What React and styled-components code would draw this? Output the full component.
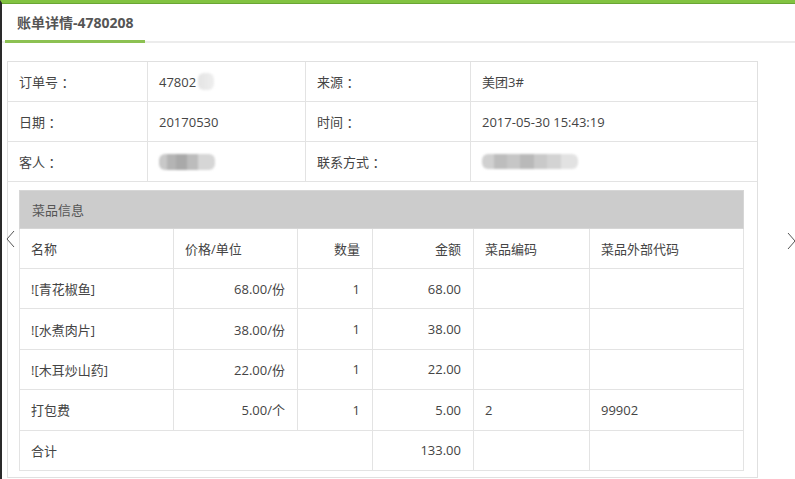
import styled, { createGlobalStyle } from "styled-components";

const GlobalStyle = createGlobalStyle`
  html, body {
    margin: 0;
    padding: 0;
    background: #fff;
  }
  body {
    font-family: "Open Sans", "Noto Sans CJK SC", sans-serif;
    font-size: 13px;
    color: #444;
  }
  * { box-sizing: border-box; }
`;

const Page = styled.div`
  position: relative;
  height: 479px;
  overflow: hidden;
  border-left: 2px solid #2a2a2a;
  border-top: 3px solid #82c341;
  box-shadow: inset 0 1px 0 #6aa634;
`;

const TitleBar = styled.div`
  display: flex;
  height: 40px;
  padding-left: 3px;
  border-bottom: 2px solid #ececec;
`;

const Tab = styled.div`
  width: 140px;
  height: 40px;
  margin-bottom: -2px;
  padding-left: 12px;
  display: flex;
  align-items: center;
  font-size: 14px;
  font-weight: 700;
  color: #555;
  border-bottom: 3px solid #8cc152;
`;

const Panel = styled.div`
  width: 751px;
  margin: 18px 0 0 5px;
  padding-bottom: 6px;
  border: 1px solid #e0e0e0;
`;

const InfoGrid = styled.div`
  display: grid;
  grid-template-columns: 140px 158px 165px 286px;
  grid-auto-rows: 40px;
`;

const InfoCell = styled.div`
  display: flex;
  align-items: center;
  padding-left: 11px;
  border-bottom: 1px solid #e3e3e3;
  border-right: ${(p) => (p.$last ? "none" : "1px solid #e3e3e3")};
  color: #444;
  white-space: pre;
`;

const Blob = styled.span`
  display: inline-block;
  width: ${(p) => p.$w}px;
  height: ${(p) => p.$h}px;
  margin-left: ${(p) => p.$ml || 0}px;
  border-radius: 6px;
  background: ${(p) => p.$bg};
  filter: blur(1.2px);
`;

const DishBox = styled.div`
  width: 725px;
  margin: 8px 0 0 11px;
`;

const DishHeader = styled.div`
  height: 39px;
  display: flex;
  align-items: center;
  padding-left: 12px;
  background: #cccccc;
  color: #555;
  border: 1px solid #d6d6d6;
`;

const DishGrid = styled.div`
  display: grid;
  grid-template-columns: 154px 124px 75px 101px 116px 154px;
  grid-template-rows: 40px repeat(5, 40.4px);
  border-left: 1px solid #e3e3e3;
`;

const DishCell = styled.div`
  display: flex;
  align-items: center;
  justify-content: ${(p) => (p.$right ? "flex-end" : "flex-start")};
  padding: 0 12px 0 11px;
  border-right: 1px solid #e3e3e3;
  border-bottom: 1px solid #e3e3e3;
  grid-column: ${(p) => (p.$span ? `span ${p.$span}` : "auto")};
  color: #444;
  white-space: nowrap;
`;

const Arrow = styled.svg`
  position: absolute;
  top: ${(p) => p.$top}px;
  left: ${(p) => p.$left}px;
`;

const blurOrder = "linear-gradient(90deg, #e4e4e4, #eeeeee)";
const blurGuest =
  "linear-gradient(90deg, #c8c8c8 0 14%, #b4b4b4 14% 30%, #a9a9a9 30% 50%, #bcbcbc 50% 70%, #d6d6d6 70% 100%)";
const blurPhone =
  "linear-gradient(90deg, #d0d0d0 0 12%, #bdbdbd 12% 26%, #c6c6c6 26% 40%, #b9b9b9 40% 54%, #c9c9c9 54% 68%, #d3d3d3 68% 82%, #e2e2e2 82% 100%)";

const dishes = [
  { name: "![青花椒鱼]", price: "68.00/份", qty: "1", amount: "68.00", code: "", ext: "" },
  { name: "![水煮肉片]", price: "38.00/份", qty: "1", amount: "38.00", code: "", ext: "" },
  { name: "![木耳炒山药]", price: "22.00/份", qty: "1", amount: "22.00", code: "", ext: "" },
  { name: "打包费", price: "5.00/个", qty: "1", amount: "5.00", code: "2", ext: "99902" },
];

const App = () => {
  return (
    <>
      <GlobalStyle />
      <Page>
        <TitleBar>
          <Tab>账单详情-4780208</Tab>
        </TitleBar>

        <Panel>
          <InfoGrid>
            <InfoCell>订单号 ：</InfoCell>
            <InfoCell>
              47802
              <Blob $w={16} $h={17} $ml={2} $bg={blurOrder} />
            </InfoCell>
            <InfoCell>来源 ：</InfoCell>
            <InfoCell $last>美团3#</InfoCell>

            <InfoCell>日期 ：</InfoCell>
            <InfoCell>20170530</InfoCell>
            <InfoCell>时间 ：</InfoCell>
            <InfoCell $last>2017-05-30 15:43:19</InfoCell>

            <InfoCell>客人 ：</InfoCell>
            <InfoCell>
              <Blob $w={56} $h={16} $bg={blurGuest} />
            </InfoCell>
            <InfoCell>联系方式 ：</InfoCell>
            <InfoCell $last>
              <Blob $w={96} $h={15} $bg={blurPhone} />
            </InfoCell>
          </InfoGrid>

          <DishBox>
            <DishHeader>菜品信息</DishHeader>
            <DishGrid>
              <DishCell>名称</DishCell>
              <DishCell>价格/单位</DishCell>
              <DishCell $right>数量</DishCell>
              <DishCell $right>金额</DishCell>
              <DishCell>菜品编码</DishCell>
              <DishCell>菜品外部代码</DishCell>

              {dishes.map((d) => (
                <>
                  <DishCell key={d.name + "n"}>{d.name}</DishCell>
                  <DishCell $right>{d.price}</DishCell>
                  <DishCell $right>{d.qty}</DishCell>
                  <DishCell $right>{d.amount}</DishCell>
                  <DishCell>{d.code}</DishCell>
                  <DishCell>{d.ext}</DishCell>
                </>
              ))}

              <DishCell $span={3}>合计</DishCell>
              <DishCell $right>133.00</DishCell>
              <DishCell />
              <DishCell />
            </DishGrid>
          </DishBox>
        </Panel>

        <Arrow $left={4} $top={227} width="10" height="18" viewBox="0 0 10 18">
          <polyline points="8,1 1,9 8,17" fill="none" stroke="#555" strokeWidth="1" />
        </Arrow>
        <Arrow $left={785} $top={229} width="10" height="18" viewBox="0 0 10 18">
          <polyline points="1,1 8,9 1,17" fill="none" stroke="#555" strokeWidth="1" />
        </Arrow>
      </Page>
    </>
  );
};

export default App;
